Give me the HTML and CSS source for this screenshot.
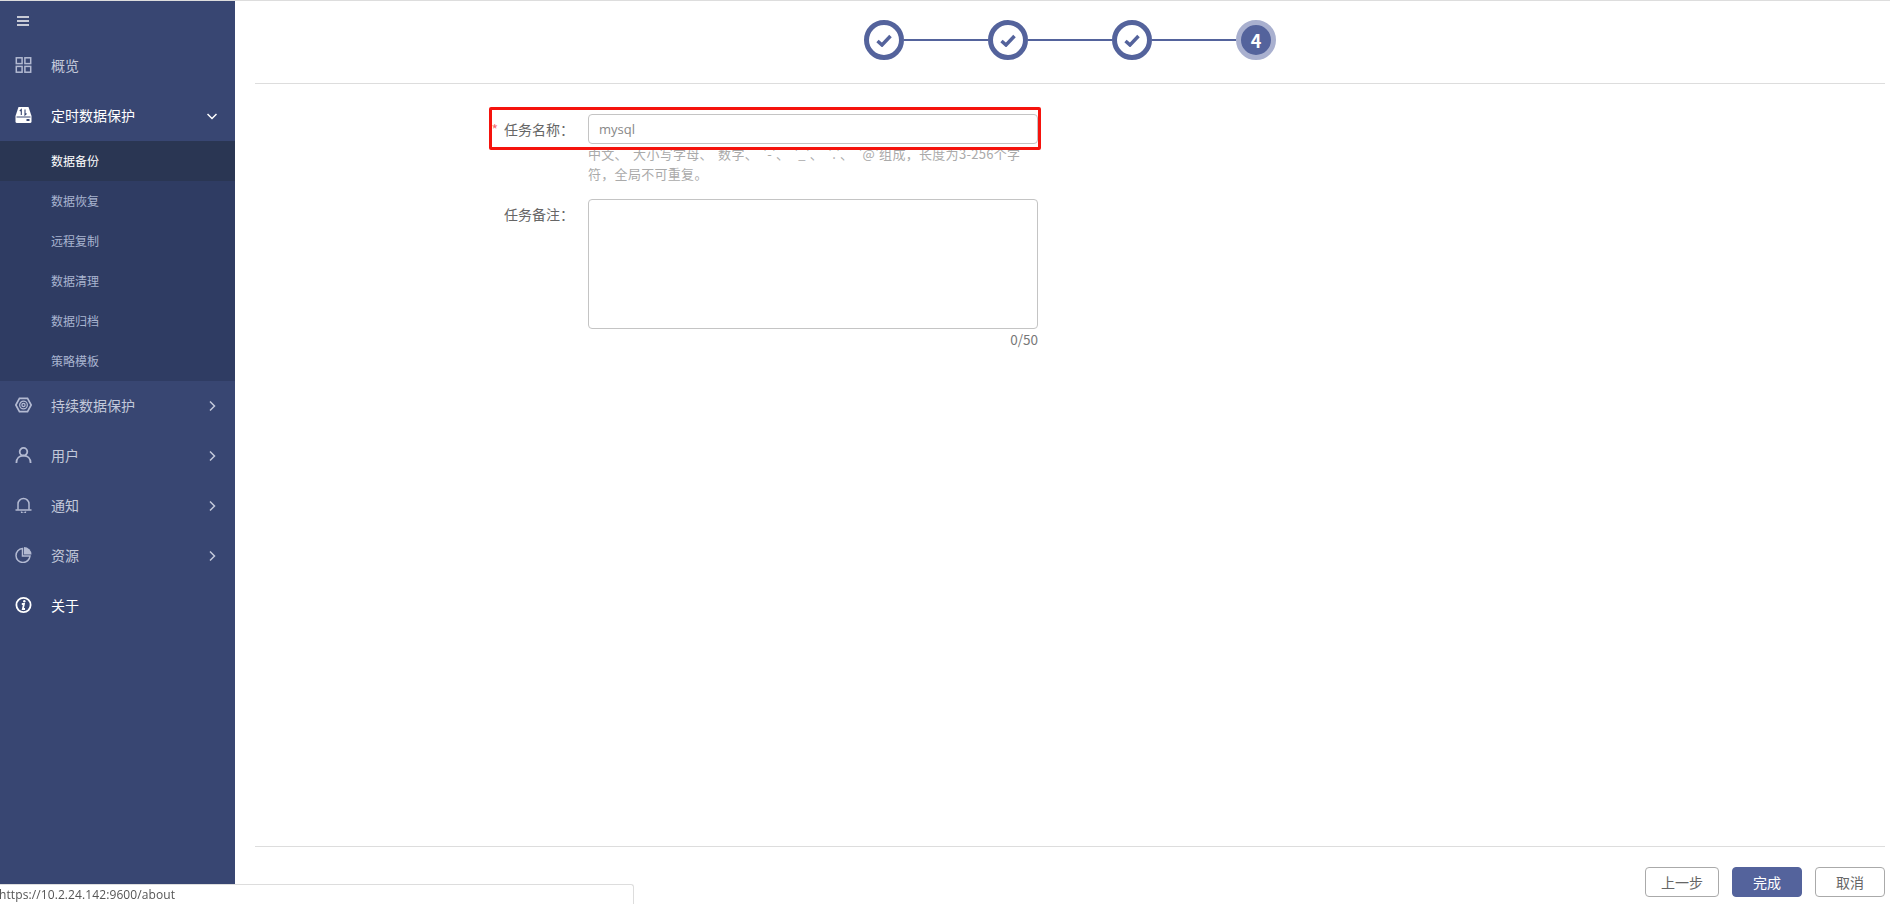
FILE: index.html
```html
<!DOCTYPE html>
<html lang="zh-CN">
<head>
  <meta charset="UTF-8" />
  <title>定时数据保护</title>
  <link rel="stylesheet" href="styles.css">
</head>
<body>
  <div class="page">
    <aside class="sidebar">
      <div class="menu-toggle">
        <svg width="14" height="12" viewBox="0 0 14 12"><path d="M1 2h12M1 6h12M1 10h12" stroke="currentColor" stroke-width="2"/></svg>
      </div>

      <a class="nav-item">
        <svg class="nav-icon" viewBox="0 0 16 16" fill="none" stroke="currentColor" stroke-width="1.500"><rect x=".8" y=".8" width="5.800" height="5.800"/><rect x="9.400" y=".8" width="5.800" height="5.800"/><rect x=".8" y="9.400" width="5.800" height="5.800"/><rect x="9.400" y="9.400" width="5.800" height="5.800"/></svg>
        <span>概览</span>
      </a>

      <a class="nav-item active">
        <svg class="nav-icon" viewBox="0 0 16 16"><path d="M3 0h10l3 9v5.500a1.500 1.500 0 0 1-1.500 1.500H1.500A1.500 1.500 0 0 1 0 14.500V9z" fill="currentColor"/><path d="M5.800 8V2.500L4.300 4M9.500 2.500V8L11 6.500" fill="none" stroke="#384672" stroke-width="1.100"/><path d="M1 10h14" stroke="#384672"/><rect x="11" y="12" width="3" height="2" fill="#384672"/></svg>
        <span>定时数据保护</span>
        <svg class="chevron" viewBox="0 0 10 10" fill="none" stroke="currentColor" stroke-width="1.500"><path d="M.5 3 5 7.500 9.500 3"/></svg>
      </a>
      <ul class="sub-menu">
        <li class="current">数据备份</li>
        <li>数据恢复</li>
        <li>远程复制</li>
        <li>数据清理</li>
        <li>数据归档</li>
        <li>策略模板</li>
      </ul>

      <a class="nav-item">
        <svg class="nav-icon" viewBox="0 0 16 14" fill="none" stroke="currentColor"><path d="M4.200 .8h7.600L15.200 7l-3.400 6.200H4.200L.8 7z" stroke-width="1.600"/><circle cx="8" cy="7" r="3.600" stroke-width="1.200"/><circle cx="8" cy="7" r="1.500" stroke-width="1.200"/></svg>
        <span>持续数据保护</span>
        <svg class="chevron" viewBox="0 0 10 10" fill="none" stroke="currentColor" stroke-width="1.500"><path d="M3 .5 7.500 5 3 9.500"/></svg>
      </a>
      <a class="nav-item">
        <svg class="nav-icon" viewBox="0 0 16 16" fill="none" stroke="currentColor" stroke-width="1.800"><circle cx="8" cy="4.700" r="3.800"/><path d="M.9 16c0-4.500 3-7.300 7.100-7.300s7.100 2.800 7.100 7.300"/></svg>
        <span>用户</span>
        <svg class="chevron" viewBox="0 0 10 10" fill="none" stroke="currentColor" stroke-width="1.500"><path d="M3 .5 7.500 5 3 9.500"/></svg>
      </a>
      <a class="nav-item">
        <svg class="nav-icon" viewBox="0 0 16 16" fill="none" stroke="currentColor" stroke-width="1.500"><path d="M2.500 12.700V7a5.500 5.500 0 0 1 11 0v5.700"/><path d="M0 13h16"/><path d="M6 14.500a2 2 0 0 0 4 0"/></svg>
        <span>通知</span>
        <svg class="chevron" viewBox="0 0 10 10" fill="none" stroke="currentColor" stroke-width="1.500"><path d="M3 .5 7.500 5 3 9.500"/></svg>
      </a>
      <a class="nav-item">
        <svg class="nav-icon" viewBox="0 0 16 16"><path d="M7 1.500a7 7 0 1 0 7.500 7.500H7z" fill="none" stroke="currentColor" stroke-width="1.500"/><path d="M8.500 0A7.500 7.500 0 0 1 16 7.500H8.500z" fill="currentColor"/></svg>
        <span>资源</span>
        <svg class="chevron" viewBox="0 0 10 10" fill="none" stroke="currentColor" stroke-width="1.500"><path d="M3 .5 7.500 5 3 9.500"/></svg>
      </a>
      <a class="nav-item active">
        <svg class="nav-icon" viewBox="0 0 16 16" fill="none" stroke="currentColor"><circle cx="8" cy="8" r="7.100" stroke-width="1.800"/><path d="M6.300 7h2.200L7.300 12h2.200" stroke-width="1.800"/><circle cx="8.800" cy="4.200" r="1.200" fill="currentColor" stroke="none"/></svg>
        <span>关于</span>
      </a>
    </aside>

    <main class="content">
      <div class="stepper">
        <div class="step done"><svg width="16" height="13" viewBox="0 0 16 13" fill="none" stroke="#54639c" stroke-width="3.500"><path d="M1.500 7 6 11 14.500 2"/></svg></div>
        <div class="step-line"></div>
        <div class="step done"><svg width="16" height="13" viewBox="0 0 16 13" fill="none" stroke="#54639c" stroke-width="3.500"><path d="M1.500 7 6 11 14.500 2"/></svg></div>
        <div class="step-line"></div>
        <div class="step done"><svg width="16" height="13" viewBox="0 0 16 13" fill="none" stroke="#54639c" stroke-width="3.500"><path d="M1.500 7 6 11 14.500 2"/></svg></div>
        <div class="step-line"></div>
        <div class="step now">4</div>
      </div>

      <form class="task-form">
        <div class="form-row first-row">
          <label class="form-label required">任务名称：</label>
          <div class="form-field">
            <input class="text-input" type="text" value="mysql" />
            <p class="help">中文、 大小写字母、 数字、 '-'、 '_'、 '.'、 '@'组成，长度为3-256个字符，全局不可重复。</p>
          </div>
          <div class="red-mark"></div>
        </div>
        <div class="form-row">
          <label class="form-label">任务备注：</label>
          <div class="form-field">
            <textarea class="text-area"></textarea>
            <div class="counter">0/50</div>
          </div>
        </div>
      </form>

      <div class="form-footer">
        <button type="button" class="btn prev">上一步</button>
        <button type="button" class="btn primary">完成</button>
        <button type="button" class="btn">取消</button>
      </div>
    </main>
  </div>

  <div class="status-bubble">https://10.2.24.142:9600/about</div>
</body>
</html>
```

FILE: styles.css
```css
* {
  box-sizing: border-box;
}

html, body {
  margin: 0;
  height: 100%;
  overflow: hidden;
}

body {
  font-family: "Noto Sans CJK SC", "Open Sans", sans-serif;
  font-size: 14px;
  color: #666;
  background: #fff;
}

.page {
  display: flex;
  height: 904px;
  border-top: 1px solid #ddd;
}

/* sidebar */
.sidebar {
  width: 235px;
  flex-shrink: 0;
  background: #384672;
  color: #c3c9da;
}

.menu-toggle {
  height: 40px;
  padding-left: 16px;
  display: flex;
  align-items: center;
  color: #c8cbd6;
}

.nav-item {
  height: 50px;
  padding: 0 0 2px 15px;
  display: flex;
  align-items: center;
}

.nav-item.active {
  color: #fff;
}

.nav-icon {
  width: 17px;
  height: 16px;
  margin-right: 19px;
  color: #b3bad2;
}

.nav-item.active .nav-icon {
  color: #fff;
}

.chevron {
  width: 10px;
  height: 10px;
  margin: 2px 18px 0 auto;
}

.sub-menu {
  list-style: none;
  margin: 0;
  padding: 0;
  background: #2f3c63;
  font-size: 12px;
  color: #a9b4d0;
}

.sub-menu li {
  height: 40px;
  line-height: 40px;
  padding-left: 51px;
}

.sub-menu .current {
  background: #2a3653;
  color: #fff;
}

/* main area */
.content {
  flex: 1;
  margin: 0 5px 0 20px;
  display: flex;
  flex-direction: column;
}

.stepper {
  height: 83px;
  padding-top: 19px;
  border-bottom: 1px solid #ddd;
  display: flex;
  justify-content: center;
  align-items: flex-start;
  flex-shrink: 0;
}

.step {
  width: 40px;
  height: 40px;
  border-radius: 50%;
  display: flex;
  align-items: center;
  justify-content: center;
}

.step.done {
  border: 5px solid #54639c;
}

.step.now {
  background: #54639c;
  border: 5px solid #a9b0cf;
  color: #fff;
  font-size: 18px;
  font-weight: 700;
}

.step-line {
  width: 84px;
  height: 2px;
  margin-top: 19px;
  background: #54639c;
}

.task-form {
  flex: 1;
  padding-top: 30px;
}

.form-row {
  display: grid;
  grid-template-columns: 319px 450px;
  column-gap: 14px;
  position: relative;
}

.first-row {
  margin-bottom: 15px;
}

.form-label {
  text-align: right;
  line-height: 30px;
  color: #666;
}

.required::before {
  content: "*";
  color: #f56c6c;
  margin-right: 6px;
}

.text-input {
  display: block;
  width: 100%;
  height: 30px;
  padding: 0 10px;
  border: 1px solid #c4c4c4;
  border-radius: 4px;
  font: 13px "Open Sans", "Noto Sans CJK SC", sans-serif;
  color: #888;
  outline: none;
}

.help {
  margin: 0;
  padding-right: 10px;
  font-size: 13px;
  line-height: 20px;
  letter-spacing: 0.3px;
  word-spacing: 2px;
  color: #aaa;
}

.text-area {
  display: block;
  width: 100%;
  height: 130px;
  border: 1px solid #c4c4c4;
  border-radius: 4px;
  resize: none;
  outline: none;
}

.counter {
  text-align: right;
  font-size: 13.500px;
  line-height: 20px;
  color: #777;
}

/* annotation drawn over the first row */
.red-mark {
  position: absolute;
  left: 234px;
  top: -7px;
  width: 552px;
  height: 43px;
  border: 3px solid #f5130d;
  border-radius: 2px;
  pointer-events: none;
}

.form-footer {
  height: 58px;
  flex-shrink: 0;
  padding-top: 20px;
  border-top: 1px solid #ddd;
  display: flex;
  justify-content: flex-end;
  gap: 13px;
}

.btn {
  width: 70px;
  height: 30px;
  padding: 0;
  border: 1px solid #aaa;
  border-radius: 4px;
  background: #fff;
  color: #666;
  font: 14px "Noto Sans CJK SC", sans-serif;
}

.btn.prev {
  width: 74px;
}

.btn.primary {
  background: #54639c;
  border-color: #54639c;
  color: #fff;
}

.status-bubble {
  position: fixed;
  left: 0;
  bottom: 0;
  width: 634px;
  height: 20px;
  background: #fff;
  border-top: 1px solid #ddd;
  border-right: 1px solid #ddd;
  border-top-right-radius: 3px;
  font: 12px/19px "Open Sans", sans-serif;
  letter-spacing: 0.1px;
  color: #555;
  text-indent: -1px;
}
```
